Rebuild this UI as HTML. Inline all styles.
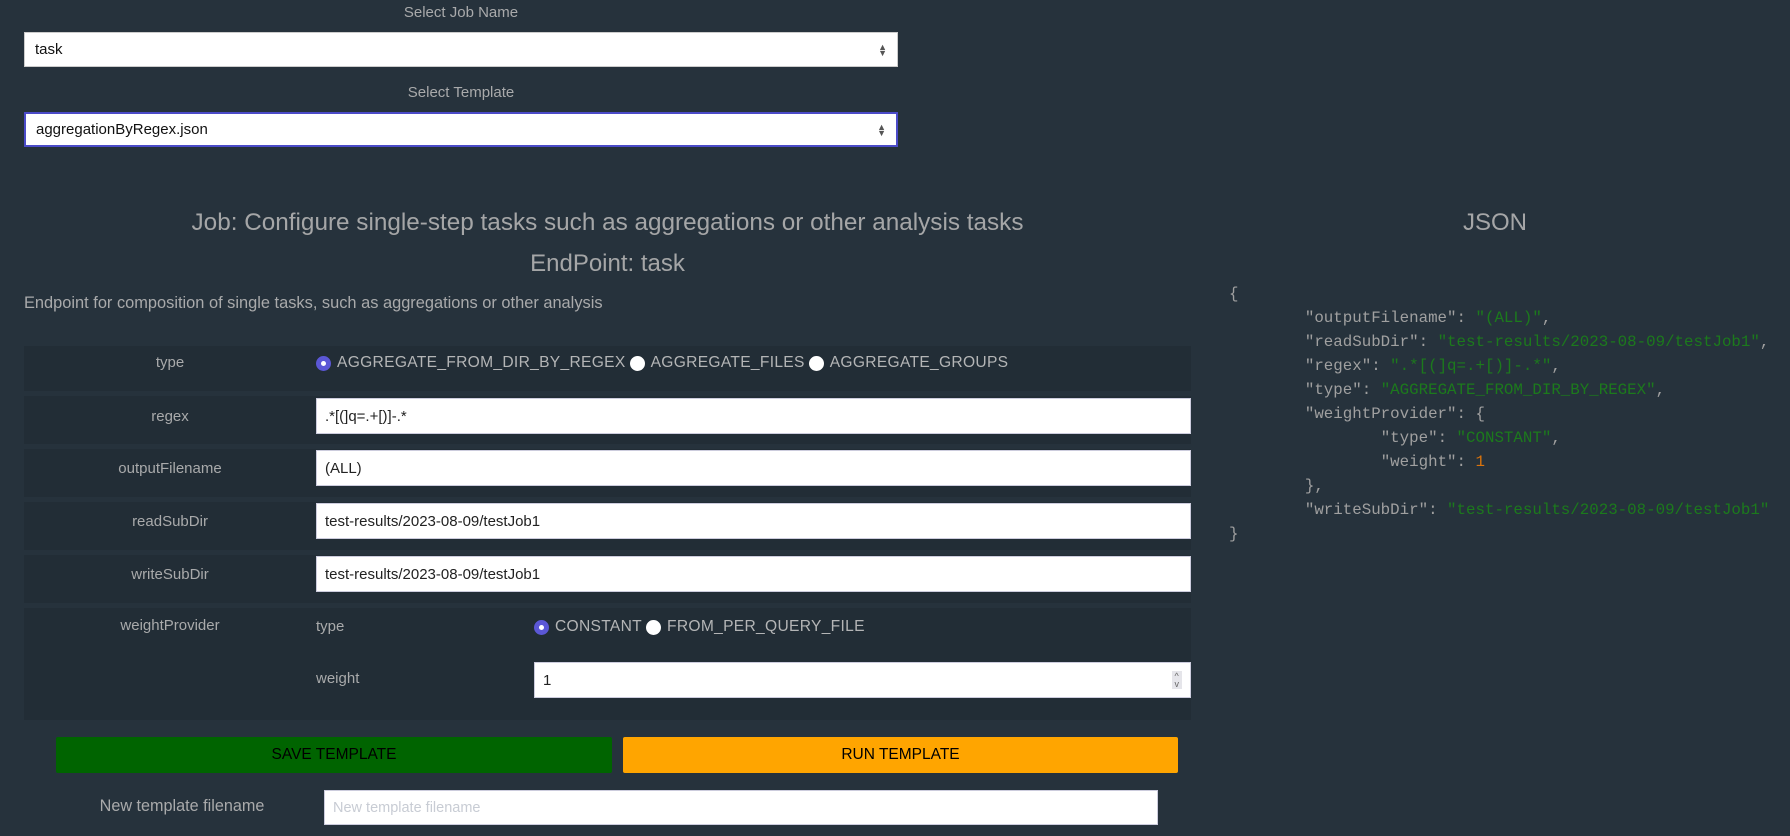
<!DOCTYPE html>
<html><head><meta charset="utf-8">
<style>
*{box-sizing:border-box;margin:0;padding:0}
body{width:1790px;height:836px;background:#26323c;font-family:"Liberation Sans",sans-serif;color:#a9aaab;position:relative;overflow:hidden}
.a{position:absolute}
.lbl{font-size:15px;text-align:center}
.sel{background:#fff;border:1px solid #ccc;color:#111;font-size:15px;padding:0 10px;display:flex;align-items:center;justify-content:space-between}
.sel span.ar{font-size:9px;color:#555;line-height:6px;text-align:center}
.row{background:#222d36}
.inp{background:#fff;color:#222;font-size:15px;padding:0 8px;display:flex;align-items:center;border:1px solid #ccd}
.rad{font-size:15.6px;display:flex;align-items:center;color:#b4b5b6;letter-spacing:.3px}
.r{width:15px;height:15px;border-radius:50%;background:#fff;display:inline-block;margin-right:6px;margin-left:4px}
.r.on{background:#5b57d6;position:relative}
.r.on:after{content:"";position:absolute;left:5px;top:5px;width:5px;height:5px;border-radius:50%;background:#fff}
pre{font-family:"Liberation Mono",monospace;font-size:15.8px;line-height:24px;color:#a0a0a0;tab-size:8}
.s{color:#1c7a1c}.n{color:#d9730d}
</style></head><body>
<div class="a lbl" style="left:24px;width:874px;top:4px;">Select Job Name</div>
<div class="a sel" style="left:24px;top:32px;width:874px;height:35px;">task<span class="ar">▲<br>▼</span></div>
<div class="a lbl" style="left:24px;width:874px;top:84px;">Select Template</div>
<div class="a sel" style="left:24px;top:112px;width:874px;height:35px;border:2px solid #4b4bc8;">aggregationByRegex.json<span class="ar">▲<br>▼</span></div>

<div class="a" style="left:24px;width:1167px;top:209px;text-align:center;font-size:24.3px;color:#a5a6a7">Job: Configure single-step tasks such as aggregations or other analysis tasks</div>
<div class="a" style="left:24px;width:1167px;top:250px;text-align:center;font-size:24px;color:#a5a6a7">EndPoint: task</div>
<div class="a" style="left:24px;top:294px;font-size:16.4px;">Endpoint for composition of single tasks, such as aggregations or other analysis</div>

<div class="a row" style="left:24px;top:346px;width:1167px;height:45px;"></div>
<div class="a lbl" style="left:24px;width:292px;top:354px;">type</div>
<div class="a rad" style="left:312px;top:354px;"><span class="r on"></span>AGGREGATE_FROM_DIR_BY_REGEX <span class="r"></span>AGGREGATE_FILES <span class="r"></span>AGGREGATE_GROUPS</div>

<div class="a row" style="left:24px;top:396px;width:1167px;height:48px;"></div>
<div class="a lbl" style="left:24px;width:292px;top:408px;">regex</div>
<div class="a inp" style="left:316px;top:398px;width:875px;height:36px;">.*[(]q=.+[)]-.*</div>

<div class="a row" style="left:24px;top:449px;width:1167px;height:48px;"></div>
<div class="a lbl" style="left:24px;width:292px;top:460px;">outputFilename</div>
<div class="a inp" style="left:316px;top:450px;width:875px;height:36px;">(ALL)</div>

<div class="a row" style="left:24px;top:502px;width:1167px;height:48px;"></div>
<div class="a lbl" style="left:24px;width:292px;top:513px;">readSubDir</div>
<div class="a inp" style="left:316px;top:503px;width:875px;height:36px;">test-results/2023-08-09/testJob1</div>

<div class="a row" style="left:24px;top:555px;width:1167px;height:48px;"></div>
<div class="a lbl" style="left:24px;width:292px;top:566px;">writeSubDir</div>
<div class="a inp" style="left:316px;top:556px;width:875px;height:36px;">test-results/2023-08-09/testJob1</div>

<div class="a row" style="left:24px;top:608px;width:1167px;height:112px;"></div>
<div class="a lbl" style="left:24px;width:292px;top:617px;">weightProvider</div>
<div class="a" style="left:316px;top:618px;font-size:15px;">type</div>
<div class="a rad" style="left:530px;top:618px;"><span class="r on"></span>CONSTANT <span class="r"></span>FROM_PER_QUERY_FILE</div>
<div class="a" style="left:316px;top:670px;font-size:15px;">weight</div>
<div class="a inp" style="left:534px;top:662px;width:657px;height:36px;justify-content:space-between">1<span style="background:#e5e5ea;font-size:9px;line-height:8px;padding:1px 3px;color:#666">^<br>v</span></div>

<div class="a" style="left:56px;top:737px;width:556px;height:36px;background:#006400;color:#000;font-size:15.5px;display:flex;align-items:center;justify-content:center;border-radius:2px">SAVE TEMPLATE</div>
<div class="a" style="left:623px;top:737px;width:555px;height:36px;background:#ffa500;color:#000;font-size:15.5px;display:flex;align-items:center;justify-content:center;border-radius:2px">RUN TEMPLATE</div>

<div class="a" style="left:52px;width:260px;top:797px;font-size:16.2px;text-align:center;">New template filename</div>
<div class="a inp" style="left:324px;top:790px;width:834px;height:35px;color:#c8ccd4;font-size:14.5px;">New template filename</div>

<div class="a" style="left:1200px;width:590px;top:209px;text-align:center;font-size:24px;color:#a5a6a7">JSON</div>
<pre class="a" style="left:1229px;top:282px;">{
	"outputFilename": <span class="s">"(ALL)"</span>,
	"readSubDir": <span class="s">"test-results/2023-08-09/testJob1"</span>,
	"regex": <span class="s">".*[(]q=.+[)]-.*"</span>,
	"type": <span class="s">"AGGREGATE_FROM_DIR_BY_REGEX"</span>,
	"weightProvider": {
		"type": <span class="s">"CONSTANT"</span>,
		"weight": <span class="n">1</span>
	},
	"writeSubDir": <span class="s">"test-results/2023-08-09/testJob1"</span>
}</pre>
</body></html>
